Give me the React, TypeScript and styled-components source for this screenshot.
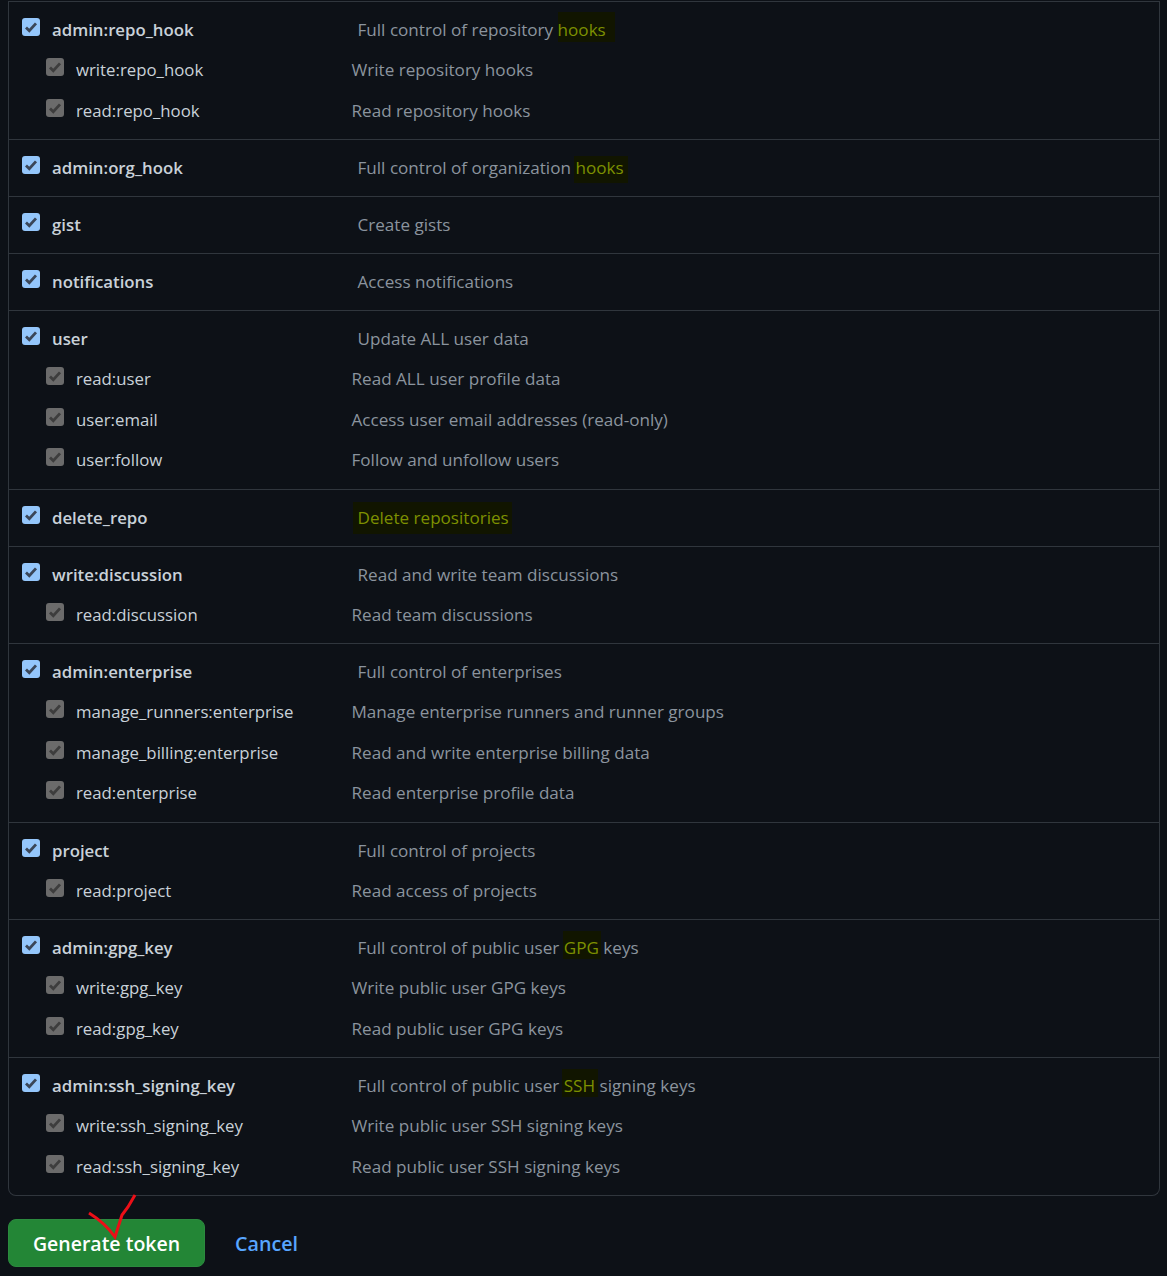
import React from 'react'
import styled, { createGlobalStyle } from 'styled-components'

type Scope = { name: string; desc: React.ReactNode }
type Group = Scope & { children?: Scope[] }

const GlobalStyle = createGlobalStyle`
  html, body { margin: 0; padding: 0; background: #0d1117; }
  body { font-family: "Open Sans", "Noto Sans", "Liberation Sans", sans-serif; font-size: 17px; color: #c9d1d9; }
`

const Page = styled.div`
  position: relative;
  width: 1167px;
  height: 1276px;
  overflow: hidden;
  padding: 1px 7px 0 8px;
  box-sizing: border-box;
`

const ScopeList = styled.div`
  border: 1px solid #30363d;
  border-top: 0;
  border-radius: 0 0 8px 8px;
`

const Section = styled.div<{ $h: number }>`
  border-top: 1px solid #30363d;
  padding-bottom: 8px;
  height: ${(p) => p.$h}px;
  box-sizing: border-box;
`

const Row = styled.div<{ $primary?: boolean }>`
  display: flex;
  align-items: flex-start;
  height: ${(p) => (p.$primary ? '48.5px' : '40.6px')};
  padding-top: ${(p) => (p.$primary ? '15.5px' : '7.5px')};
  padding-left: ${(p) => (p.$primary ? '13px' : '37px')};
  box-sizing: border-box;
`

const Box = styled.span<{ $primary?: boolean }>`
  flex: none;
  width: 18px;
  height: 18px;
  border-radius: 3px;
  background: ${(p) => (p.$primary ? '#94c6fb' : '#6b6b6b')};
  display: flex;
  align-items: center;
  justify-content: center;
  svg { display: block; }
`

const Name = styled.span<{ $primary?: boolean }>`
  flex: none;
  width: ${(p) => (p.$primary ? '305.5px' : '275.5px')};
  margin-left: 12px;
  line-height: 24px;
  font-size: 16.8px;
  font-weight: ${(p) => (p.$primary ? 600 : 400)};
  color: #c9d1d9;
`

const Desc = styled.span`
  line-height: 24px;
  font-size: 17.1px;
  color: #8b949e;
`

// hand-painted highlight, each one overflows its word by a different amount
const Mark = styled.span<{ $t: number; $r: number; $b: number; $l: number }>`
  color: #7d9000;
  background: #111500;
  padding: ${(p) => `${p.$t}px ${p.$r}px ${p.$b}px ${p.$l}px`};
  margin: 0 ${(p) => -p.$r}px 0 ${(p) => -p.$l}px;
`

const Actions = styled.div`
  display: flex;
  align-items: center;
  gap: 30px;
  margin-top: 23px;
`

const GenerateButton = styled.button`
  width: 197px;
  height: 48px;
  border: 1px solid #2b8a3e;
  border-radius: 8px;
  background: #238636;
  color: #fff;
  font: 600 19.5px "Open Sans", "Noto Sans", sans-serif;
  padding: 1px 0 0;
`

const CancelLink = styled.a`
  color: #58a6ff;
  font-size: 19.7px;
  font-weight: 600;
  margin-top: 1px;
`

const Scribble = styled.svg`
  position: absolute;
  left: 0;
  top: 0;
  pointer-events: none;
`

const Tick = ({ dark }: { dark: string }) => (
  <svg width="14" height="14" viewBox="0 0 14 14" fill="none">
    <path d="M2 7.5 L5.3 10.8 L12 3.4" stroke={dark} strokeWidth="2.8" />
  </svg>
)

const groups: (Group & { h: number })[] = [
  {
    h: 138,
    name: 'admin:repo_hook',
    desc: <>Full control of repository <Mark $t={6} $r={9} $b={1} $l={0}>hooks</Mark></>,
    children: [
      { name: 'write:repo_hook', desc: 'Write repository hooks' },
      { name: 'read:repo_hook', desc: 'Read repository hooks' },
    ],
  },
  { h: 57, name: 'admin:org_hook', desc: <>Full control of organization <Mark $t={0} $r={4} $b={4} $l={1}>hooks</Mark></> },
  { h: 57, name: 'gist', desc: 'Create gists' },
  { h: 57, name: 'notifications', desc: 'Access notifications' },
  {
    h: 179,
    name: 'user',
    desc: 'Update ALL user data',
    children: [
      { name: 'read:user', desc: 'Read ALL user profile data' },
      { name: 'user:email', desc: 'Access user email addresses (read-only)' },
      { name: 'user:follow', desc: 'Follow and unfollow users' },
    ],
  },
  { h: 57, name: 'delete_repo', desc: <Mark $t={4} $r={3} $b={5} $l={5}>Delete repositories</Mark> },
  {
    h: 97,
    name: 'write:discussion',
    desc: 'Read and write team discussions',
    children: [{ name: 'read:discussion', desc: 'Read team discussions' }],
  },
  {
    h: 179,
    name: 'admin:enterprise',
    desc: 'Full control of enterprises',
    children: [
      { name: 'manage_runners:enterprise', desc: 'Manage enterprise runners and runner groups' },
      { name: 'manage_billing:enterprise', desc: 'Read and write enterprise billing data' },
      { name: 'read:enterprise', desc: 'Read enterprise profile data' },
    ],
  },
  {
    h: 97,
    name: 'project',
    desc: 'Full control of projects',
    children: [{ name: 'read:project', desc: 'Read access of projects' }],
  },
  {
    h: 138,
    name: 'admin:gpg_key',
    desc: <>Full control of public user <Mark $t={5} $r={2} $b={0} $l={1}>GPG</Mark> keys</>,
    children: [
      { name: 'write:gpg_key', desc: 'Write public user GPG keys' },
      { name: 'read:gpg_key', desc: 'Read public user GPG keys' },
    ],
  },
  {
    h: 138,
    name: 'admin:ssh_signing_key',
    desc: <>Full control of public user <Mark $t={5} $r={3} $b={0} $l={2}>SSH</Mark> signing keys</>,
    children: [
      { name: 'write:ssh_signing_key', desc: 'Write public user SSH signing keys' },
      { name: 'read:ssh_signing_key', desc: 'Read public user SSH signing keys' },
    ],
  },
]

const App = () => {
  return (
    <Page>
      <GlobalStyle />
      <ScopeList>
        {groups.map((g) => (
          <Section key={g.name} $h={g.h}>
            <Row $primary>
              <Box $primary><Tick dark="#3a4658" /></Box>
              <Name $primary>{g.name}</Name>
              <Desc>{g.desc}</Desc>
            </Row>
            {g.children?.map((c) => (
              <Row key={c.name}>
                <Box><Tick dark="#3d3d3d" /></Box>
                <Name>{c.name}</Name>
                <Desc>{c.desc}</Desc>
              </Row>
            ))}
          </Section>
        ))}
      </ScopeList>
      <Actions>
        <GenerateButton>Generate token</GenerateButton>
        <CancelLink>Cancel</CancelLink>
      </Actions>
      <Scribble width="1167" height="1276" viewBox="0 0 1167 1276" fill="none">
        <path d="M89 1213 C97 1218 106 1224 115 1237 L122 1215 L128 1207 L135 1195" stroke="#ec0f17" strokeWidth="3" />
      </Scribble>
    </Page>
  )
}

export default App
